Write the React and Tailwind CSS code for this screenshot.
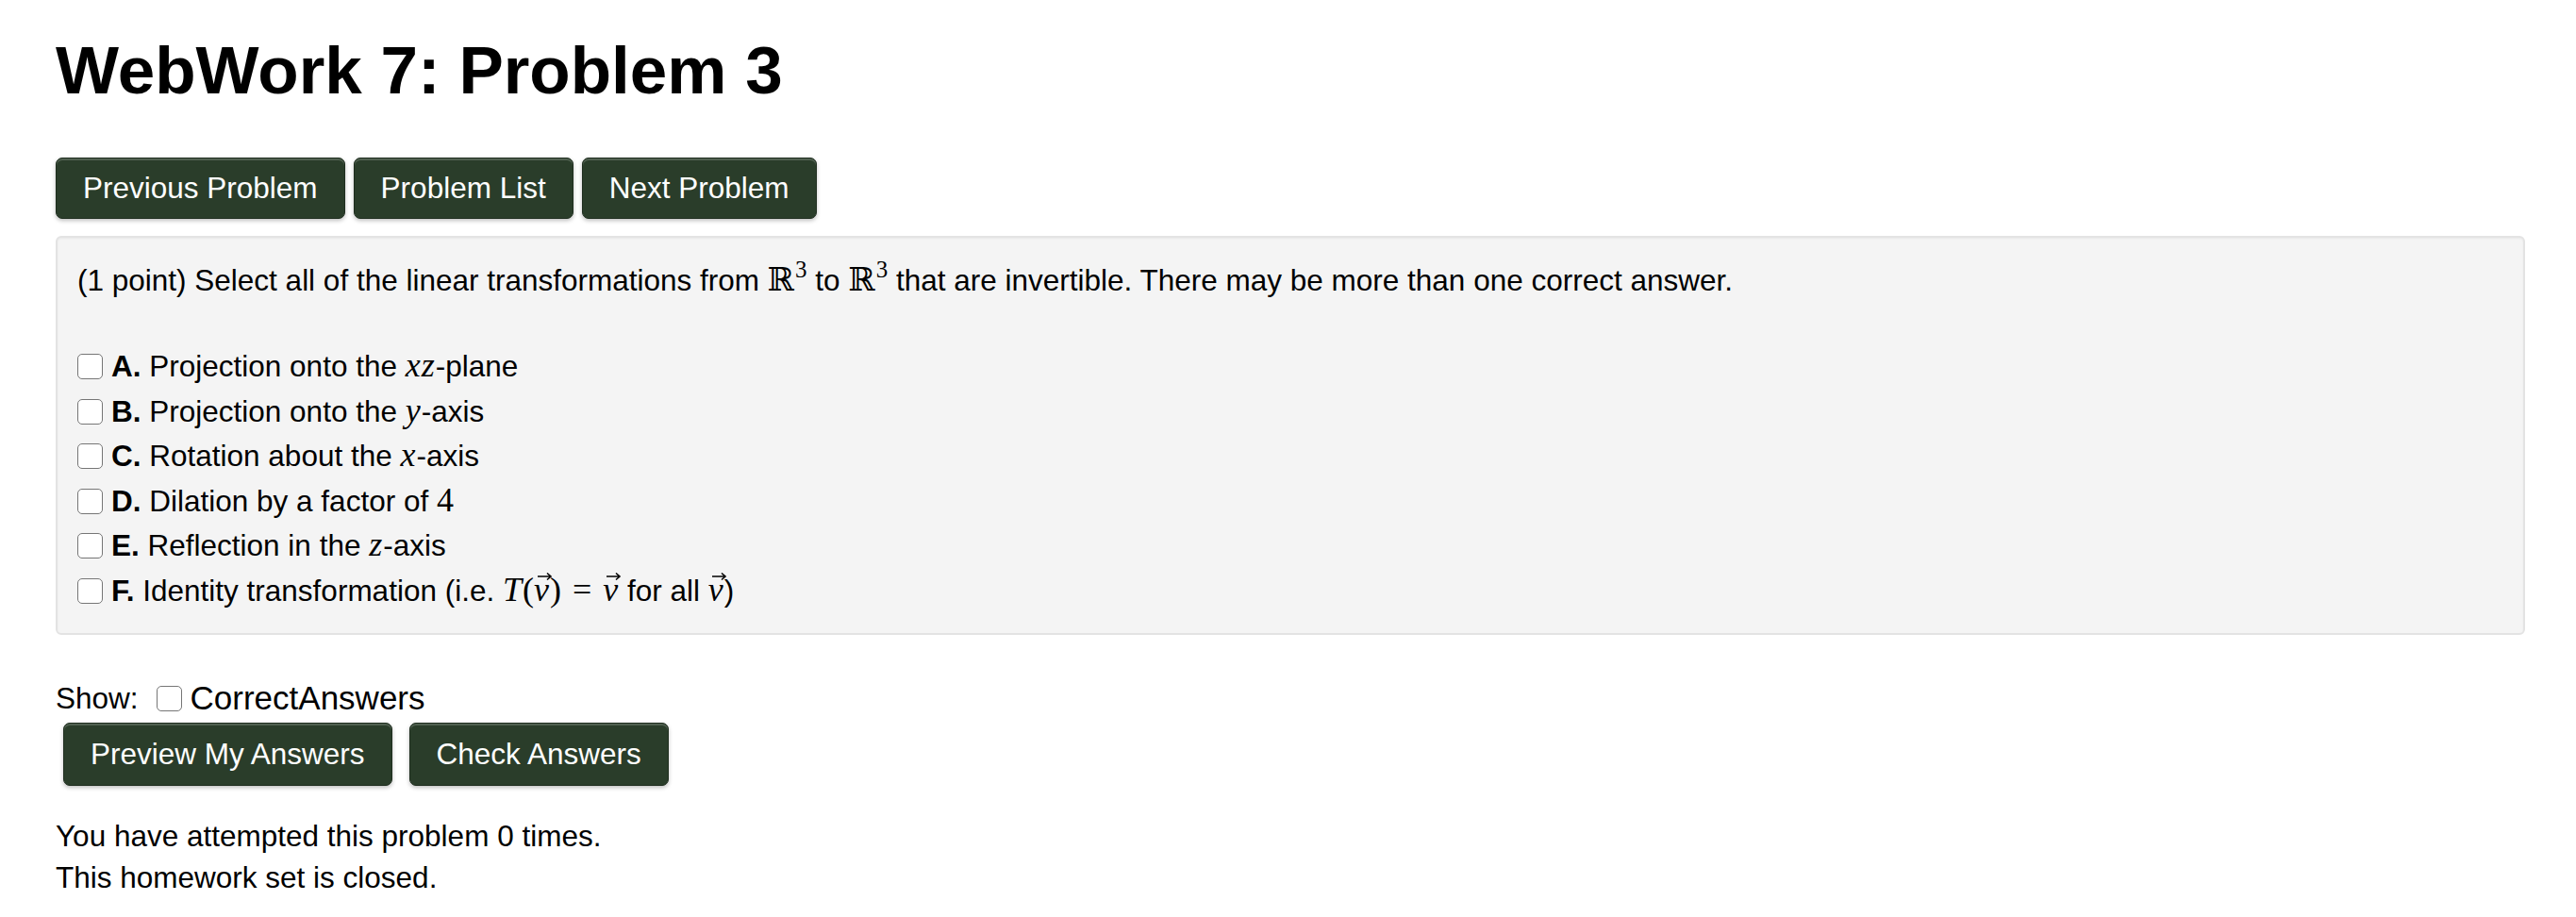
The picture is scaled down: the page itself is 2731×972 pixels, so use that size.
import React from 'react';

const sans = { fontFamily: '"Liberation Sans", Arial, sans-serif' };
const serif = { fontFamily: '"Liberation Serif", "Times New Roman", serif' };

const Btn = ({ children, tall }) => (
  <button
    className={
      (tall ? 'h-[67px] ' : 'h-[65px] ') +
      'px-[28px] rounded-[7px] bg-[#2a3d2a] text-white text-[31.5px] leading-none border border-[#1f2e1f] shadow-[inset_0_2px_0_rgba(255,255,255,0.18),0_2px_4px_rgba(0,0,0,0.25)]'
    }
  >
    {children}
  </button>
);

const Box = () => (
  <span className="inline-block w-[27px] h-[27px] rounded-[5px] border-[1.5px] border-[#767676] bg-white shrink-0" />
);

// math pieces, MathJax-ish
const M = ({ children }) => (
  <span className="italic text-[36px] leading-none tracking-[1px]" style={serif}>
    {children}
  </span>
);

const Up = ({ children, className = '' }) => (
  <span className={'text-[36px] leading-none ' + className} style={serif}>
    {children}
  </span>
);

const Vec = () => (
  <span className="relative inline-block">
    <M>v</M>
    <svg className="absolute left-[3px] top-[3px]" width="17" height="10" viewBox="0 0 17 10">
      <path d="M1 5h14M11 1.5l4 3.5-4 3.5" fill="none" stroke="#000" strokeWidth="1.6" />
    </svg>
  </span>
);

const R3 = () => (
  <span className="whitespace-nowrap">
    <span className="text-[34px]" style={{ fontFamily: '"DejaVu Serif", serif' }}>ℝ</span>
    <span className="text-[25px] relative top-[-14px] ml-[1px]" style={serif}>3</span>
  </span>
);

const answers = [
  ['A.', <>Projection onto the <M>xz</M>-plane</>],
  ['B.', <>Projection onto the <M>y</M>-axis</>],
  ['C.', <>Rotation about the <M>x</M>-axis</>],
  ['D.', <>Dilation by a factor of <Up>4</Up></>],
  ['E.', <>Reflection in the <M>z</M>-axis</>],
  [
    'F.',
    <>
      Identity transformation (i.e. <M>T</M>
      <Up>(</Up>
      <Vec />
      <Up>)</Up>
      <Up className="mx-[12px]">=</Up>
      <Vec /> for all <Vec />)
    </>,
  ],
];

export default function App() {
  return (
    <div className="min-h-screen bg-white text-black pl-[59px] pr-[54px] pb-10" style={sans}>
      <h1 className="pt-[36px] text-[71px] font-bold leading-[77px]">WebWork 7: Problem 3</h1>

      <div className="mt-[54px] flex gap-[9px]">
        <Btn>Previous Problem</Btn>
        <Btn>Problem List</Btn>
        <Btn>Next Problem</Btn>
      </div>

      <div className="mt-[18px] rounded-[6px] border-2 border-[#e3e3e3] bg-[#f4f4f4] pt-[21px] px-[21px] pb-[21px] shadow-[inset_0_1px_2px_rgba(0,0,0,0.05)] text-[31.5px] leading-[47px]">
        <div>
          (1 point) Select all of the linear transformations from <R3 /> to <R3 /> that are invertible. There may be more
          than one correct answer.
        </div>
        <div className="h-[42px]" />
        {answers.map(([k, v]) => (
          <div key={k} className="flex items-center h-[47.5px]">
            <Box />
            <span className="ml-[9px] whitespace-nowrap">
              <b>{k}</b> {v}
            </span>
          </div>
        ))}
      </div>

      <div className="mt-[44px] flex items-center h-[47px] text-[31.5px]">
        <span>Show:</span>
        <span className="ml-[19px] flex">
          <Box />
        </span>
        <span className="ml-[9px] text-[35px]">CorrectAnswers</span>
      </div>

      <div className="mt-[2px] ml-[8px] flex gap-[18px]">
        <Btn tall>Preview My Answers</Btn>
        <Btn tall>Check Answers</Btn>
      </div>

      <div className="mt-[31px] text-[31.5px] leading-[44px]">
        <div>You have attempted this problem 0 times.</div>
        <div>This homework set is closed.</div>
      </div>
    </div>
  );
}
